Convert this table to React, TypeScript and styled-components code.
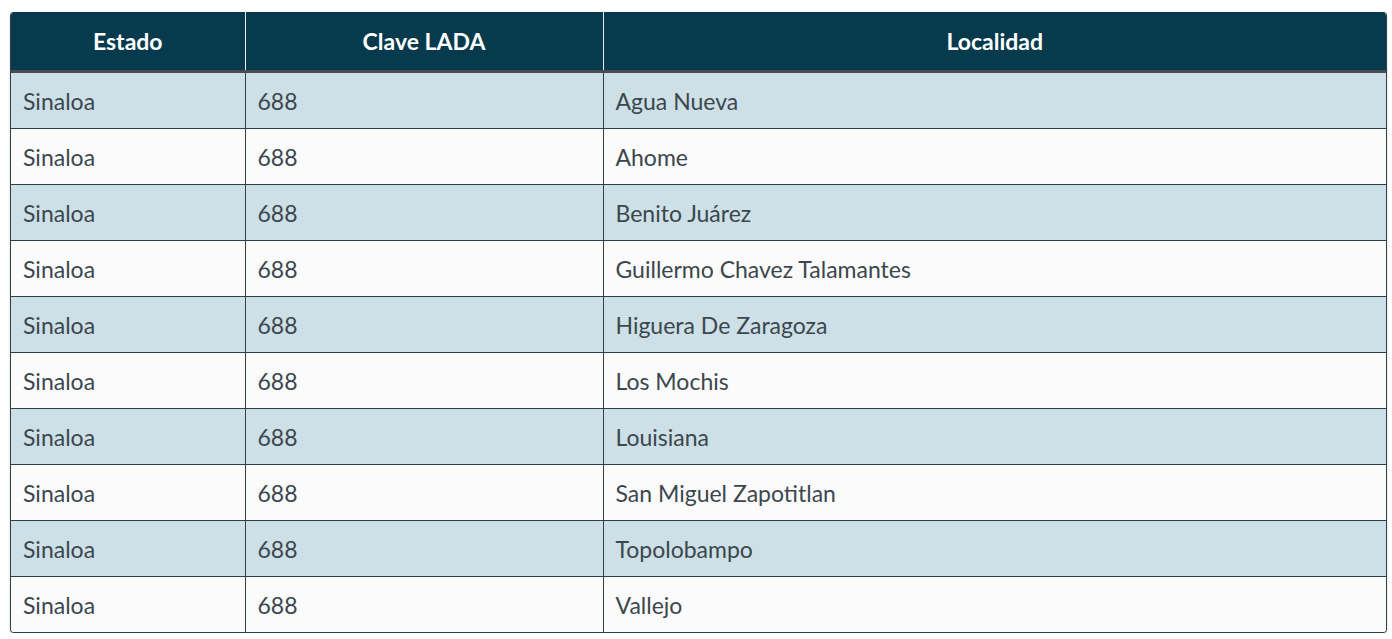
import React from 'react';
import styled, { createGlobalStyle } from 'styled-components';

const GlobalStyle = createGlobalStyle`
    body {
        margin: 0;
        background: #ffffff;
        font-family: Lato, "Open Sans", sans-serif;
    }
`;

const rows = [
    'Agua Nueva',
    'Ahome',
    'Benito Juárez',
    'Guillermo Chavez Talamantes',
    'Higuera De Zaragoza',
    'Los Mochis',
    'Louisiana',
    'San Miguel Zapotitlan',
    'Topolobampo',
    'Vallejo',
];

export default function App() {
    return (
        <Page>
            <GlobalStyle />
            <TableWrapper>
                <Table>
                    <colgroup>
                        <col style={{ width: 234 }} />
                        <col style={{ width: 358 }} />
                        <col />
                    </colgroup>
                    <thead>
                        <tr>
                            <HeadCell>Estado</HeadCell>
                            <HeadCell>Clave LADA</HeadCell>
                            <HeadCell>Localidad</HeadCell>
                        </tr>
                    </thead>
                    <tbody>
                        {rows.map((loc, i) => (
                            <Row key={loc} $striped={i % 2 === 0}>
                                <Cell>Sinaloa</Cell>
                                <Cell>688</Cell>
                                <Cell>{loc}</Cell>
                            </Row>
                        ))}
                    </tbody>
                </Table>
            </TableWrapper>
        </Page>
    );
}

const Page = styled.div`
    padding: 12px 7px 0 10px;
`;

const TableWrapper = styled.div`
    width: 1375px;
    border: 1px solid #2f3f46;
    border-top: none;
    border-radius: 4px;
    overflow: hidden;
    box-shadow: 0 1px 3px rgba(0, 0, 0, 0.15);
`;

const Table = styled.table`
    width: 100%;
    border-collapse: collapse;
    table-layout: fixed;
`;

const HeadCell = styled.th`
    height: 58px;
    padding: 0 12px;
    background: #073a4d;
    color: #ffffff;
    font-size: 23px;
    font-weight: 700;
    text-align: center;
    border-bottom: 3px solid #4a4c52;
    border-left: 1px solid #e6eef1;
    &:first-child {
        border-left: none;
    }
`;

const Row = styled.tr<{ $striped: boolean }>`
    background: ${p => (p.$striped ? '#cde0e7' : '#fbfbfc')};
    &:last-child td {
        border-bottom: none;
    }
`;

const Cell = styled.td`
    height: 55px;
    padding: 0 12px;
    color: #3b474d;
    font-size: 23px;
    text-align: left;
    border-left: 1px solid #2f3f46;
    border-bottom: 1px solid #2f3f46;
    &:first-child {
        border-left: none;
    }
`;
